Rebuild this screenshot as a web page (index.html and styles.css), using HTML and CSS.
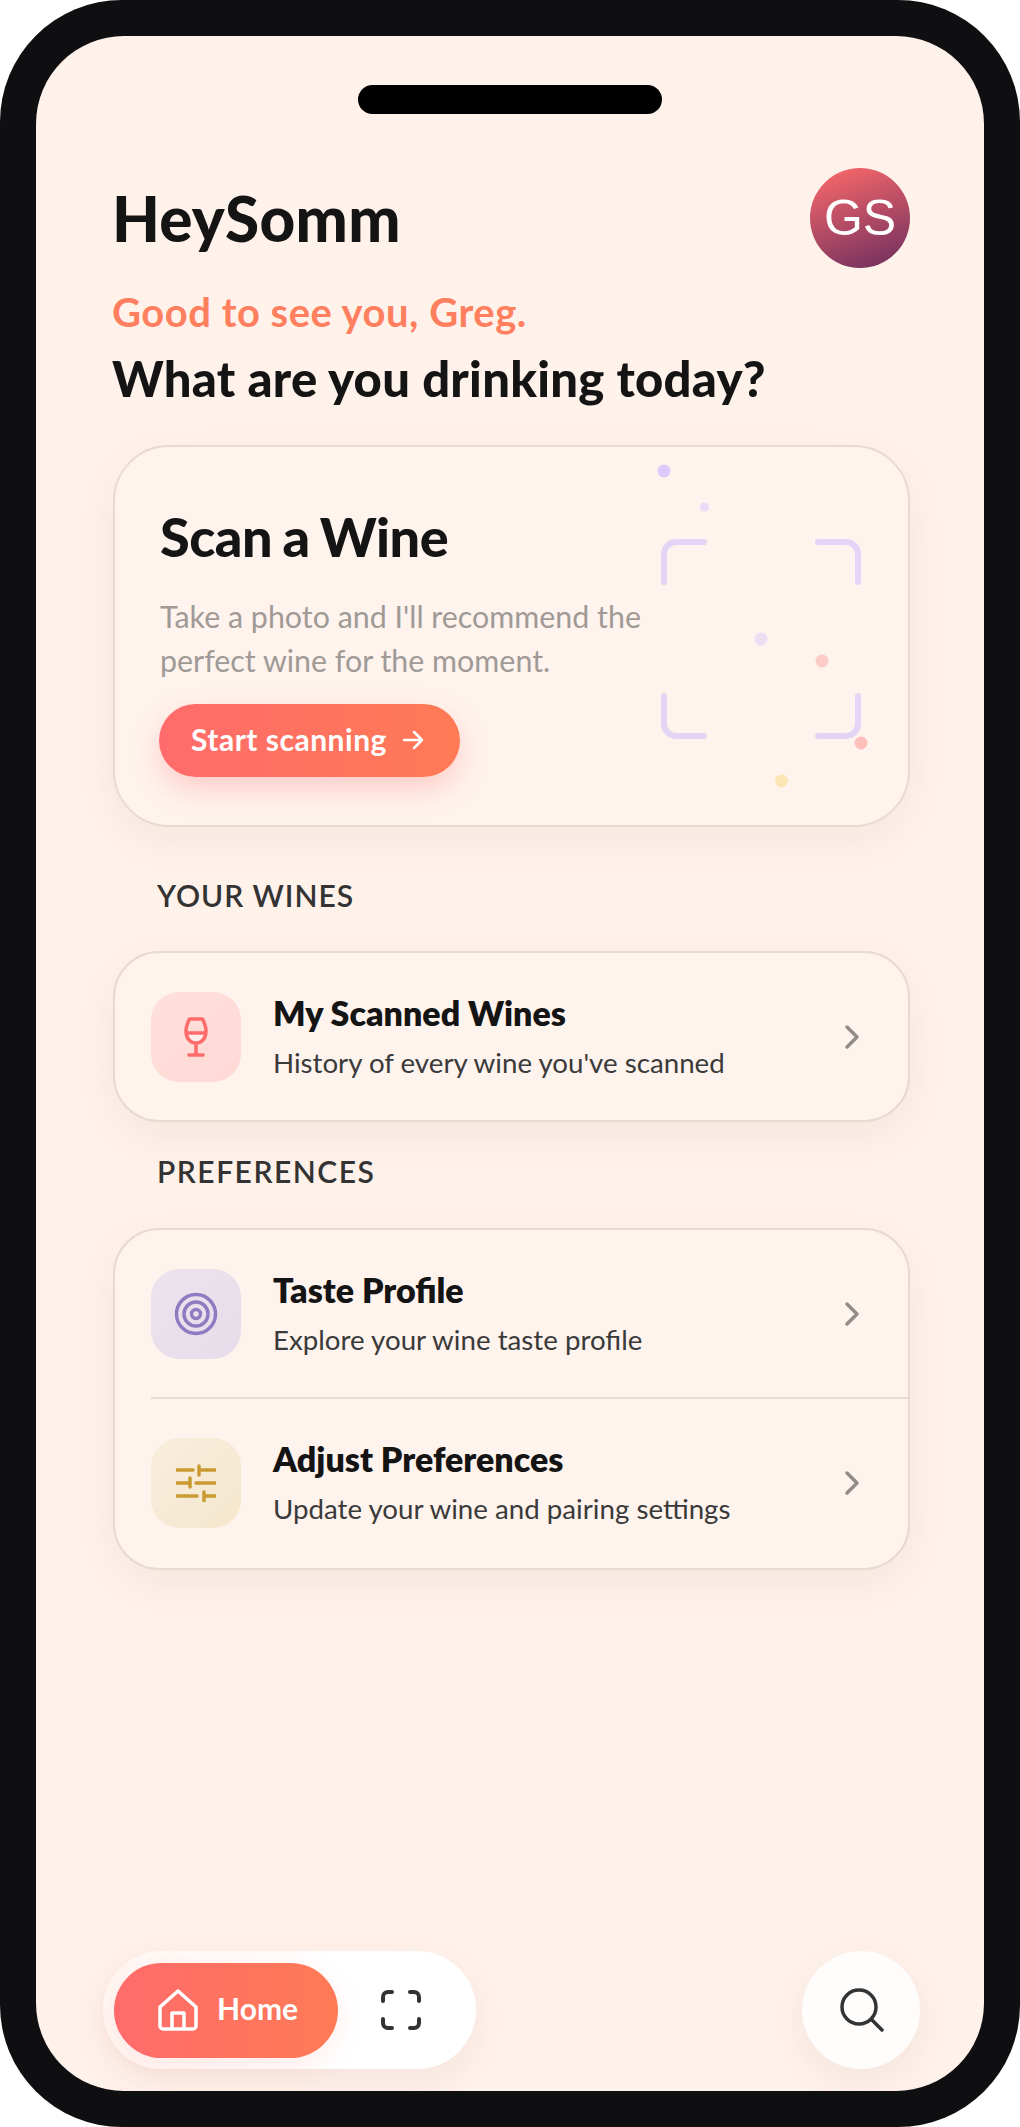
FILE: index.html
```html
<!DOCTYPE html>
<html lang="en">
<head>
<meta charset="utf-8">
<title>HeySomm</title>
<link rel="stylesheet" href="styles.css">
</head>
<body>
<div class="phone">
  <main class="screen">
    <div class="notch"></div>
    <header class="top">
      <h1 class="brand">HeySomm</h1>
      <div class="avatar">GS</div>
    </header>
    <p class="greeting">Good to see you, Greg.</p>
    <h2 class="question">What are you drinking today?</h2>

    <section class="card scan">
      <h3 class="scan-title">Scan a Wine</h3>
      <p class="scan-text">Take a photo and I'll recommend the perfect wine for the moment.</p>
      <button class="scan-btn"><span>Start scanning</span>
        <svg class="arrow" viewBox="0 0 22 22" width="22" height="22"><path d="M2 11h18M12 3l8 8-8 8"/></svg>
      </button>
      <svg class="scan-art" viewBox="0 0 270 382" width="270" height="382">
        <g class="frame">
          <path d="M24 137V109a12 12 0 0 1 12-12H64"/>
          <path d="M178 97H206a12 12 0 0 1 12 12V137"/>
          <path d="M24 251V279a12 12 0 0 0 12 12H64"/>
          <path d="M218 251V279a12 12 0 0 1-12 12H178"/>
        </g>
        <circle cx="24" cy="26" r="6.5" fill="#dccafb"/>
        <circle cx="64.500" cy="62" r="4.500" fill="#e8dcf6"/>
        <circle cx="121" cy="194" r="6.500" fill="#ecdff4"/>
        <circle cx="182" cy="216" r="6.500" fill="#ffcbc6"/>
        <circle cx="221" cy="298" r="6.500" fill="#ffbfba"/>
        <circle cx="141.500" cy="336" r="6.500" fill="#fbe5b3"/>
      </svg>
    </section>

    <h4 class="section-label">YOUR WINES</h4>
    <section class="card list">
      <div class="row">
        <div class="tile tile-red">
          <svg viewBox="0 0 30 46" width="30" height="46" class="ic ic-red">
            <path class="liquid" d="M5 19h20c0 6-4 10-10 10S5 25 5 19z"/>
            <path d="M8.500 5h13c1.500 3 3.500 8 3.500 12 0 7-4 12-10 12S5 24 5 17c0-4 2-9 3.500-12zM5.200 19h19.600M15 29v12M8 41h14"/>
          </svg>
        </div>
        <div class="row-text">
          <div class="row-title">My Scanned Wines</div>
          <div class="row-sub">History of every wine you've scanned</div>
        </div>
        <svg class="chev" viewBox="0 0 16 26" width="16" height="26"><path d="M3 3l10 10L3 23"/></svg>
      </div>
    </section>

    <h4 class="section-label label-pref">PREFERENCES</h4>
    <section class="card list">
      <div class="row">
        <div class="tile tile-purple">
          <svg viewBox="0 0 44 44" width="44" height="44" class="ic ic-purple">
            <circle cx="22" cy="22" r="19.500"/><circle cx="22" cy="22" r="12"/><circle cx="22" cy="22" r="4.500"/>
          </svg>
        </div>
        <div class="row-text">
          <div class="row-title">Taste Profile</div>
          <div class="row-sub">Explore your wine taste profile</div>
        </div>
        <svg class="chev" viewBox="0 0 16 26" width="16" height="26"><path d="M3 3l10 10L3 23"/></svg>
      </div>
      <div class="divider"></div>
      <div class="row row-last">
        <div class="tile tile-gold">
          <svg viewBox="0 0 40 38" width="40" height="38" class="ic ic-gold">
            <path d="M1 6h16M24 6h15M23 2v9M1 19h11M14 14v9M20 19h19M1 32h20M28 28v9M28 32h11"/>
          </svg>
        </div>
        <div class="row-text">
          <div class="row-title">Adjust Preferences</div>
          <div class="row-sub">Update your wine and pairing settings</div>
        </div>
        <svg class="chev" viewBox="0 0 16 26" width="16" height="26"><path d="M3 3l10 10L3 23"/></svg>
      </div>
    </section>

    <nav class="bottom">
      <div class="nav-pill">
        <div class="nav-home">
          <svg viewBox="0 0 40 42" width="40" height="42" class="ic ic-white">
            <path d="M2 18 20 2l18 16v19a3 3 0 0 1-3 3H5a3 3 0 0 1-3-3zM14 40V24h12v16"/>
          </svg>
          <span class="nav-label">Home</span>
        </div>
        <div class="nav-scan">
          <svg viewBox="0 0 40 40" width="40" height="40" class="ic ic-scan">
            <path d="M2 11V7a5 5 0 0 1 5-5h4M29 2h4a5 5 0 0 1 5 5v4M2 29v4a5 5 0 0 0 5 5h4M38 29v4a5 5 0 0 1-5 5h-4"/>
          </svg>
        </div>
      </div>
      <div class="nav-search">
        <svg viewBox="0 0 44 44" width="44" height="44" class="ic ic-dark">
          <circle cx="19" cy="19" r="17"/><path d="M31.500 31.500 42 42"/>
        </svg>
      </div>
    </nav>
  </main>
</div>
</body>
</html>
```
FILE: styles.css
```css
* { box-sizing: border-box; }
html, body { margin: 0; padding: 0; background: #fff; }
body { font-family: "Lato", "Liberation Sans", sans-serif; color: #141414; }

.phone {
  width: 1020px;
  height: 2127px;
  padding: 36px;
  background: #0f0f11;
  border-radius: 122px;
}
.screen {
  position: relative;
  height: 100%;
  padding: 49px 74px 22px 77px;
  display: flex;
  flex-direction: column;
  background: #fff2eb;
  border-radius: 88px;
  overflow: hidden;
}
.notch {
  align-self: center;
  flex: none;
  width: 304px;
  height: 29px;
  margin-right: 3px;
  background: #000;
  border-radius: 15px;
}
.top {
  display: flex;
  justify-content: space-between;
  align-items: flex-start;
  margin-top: 54px;
  flex: none;
}
.brand {
  margin: 12px 0 0 -1px;
  font-size: 62px;
  line-height: 76px;
  font-weight: 900;
  letter-spacing: .300px;
}
.avatar {
  width: 100px;
  height: 100px;
  border-radius: 50%;
  display: flex;
  align-items: center;
  justify-content: center;
  font-family: "Liberation Sans", sans-serif;
  font-size: 50px;
  color: #fff;
  background: linear-gradient(160deg, #ff6b6b 0%, #6b2d5e 100%);
}
.greeting {
  margin: 21px 0 0 -1px;
  font-size: 40px;
  line-height: 46px;
  font-weight: 700;
  letter-spacing: .500px;
  color: #ff7f5f;
}
.question {
  margin: 15px 0 0 -1px;
  font-size: 49px;
  line-height: 56px;
  font-weight: 900;
  letter-spacing: .270px;
}

.card {
  flex: none;
  background: #fff3ed;
  border: 2px solid #e9dad1;
  box-shadow: 0 14px 44px rgba(120, 80, 60, .07);
}
.scan {
  position: relative;
  height: 382px;
  margin-top: 39px;
  padding: 58px 45px 0;
  border-radius: 56px;
}
.scan-title {
  margin: 0;
  font-size: 54px;
  line-height: 64px;
  font-weight: 900;
  letter-spacing: -.500px;
  word-spacing: -2px;
}
.scan-text {
  width: 490px;
  margin: 25px 0 0;
  font-size: 30.400px;
  line-height: 44px;
  color: #a09a96;
}
.scan-btn {
  display: flex;
  align-items: center;
  gap: 15px;
  height: 73px;
  width: 301px;
  margin: 22px 0 0 -1px;
  padding: 0 0 0 32px;
  border: 0;
  border-radius: 37px;
  font-family: inherit;
  font-size: 30px;
  font-weight: 700;
  letter-spacing: .500px;
  color: #fff;
  background: linear-gradient(90deg, #ff6b6b, #ff7a55);
  box-shadow: 0 12px 28px rgba(255, 107, 107, .28);
}
.scan-btn span { margin-bottom: 4px; }
.arrow { fill: none; stroke: #fff; stroke-width: 2.500; stroke-linecap: round; stroke-linejoin: round; margin-bottom: 2px; }
.scan-art { position: absolute; right: -2px; top: -2px; }
.frame { fill: none; stroke: #e2d5f5; stroke-width: 6; stroke-linecap: round; }

.section-label {
  flex: none;
  margin: 50px 0 0 44px;
  font-size: 30px;
  line-height: 36px;
  font-weight: 600;
  letter-spacing: 1px;
  color: #333;
}
.label-pref { margin-top: 31px; letter-spacing: 1.500px; }
.list { margin-top: 38px; border-radius: 46px; }
.label-pref + .list { margin-top: 39px; }

.row {
  display: flex;
  align-items: center;
  height: 167px;
  padding: 0 48px 0 36px;
}
.row-last { height: 169px; padding-bottom: 2px; }
.tile {
  flex: none;
  width: 90px;
  height: 90px;
  border-radius: 28px;
  display: flex;
  align-items: center;
  justify-content: center;
}
.tile-red { background: linear-gradient(135deg, #ffe0dc, #ffd8d4); }
.tile-purple { background: linear-gradient(135deg, #ece3ee, #e7ddea); }
.tile-gold { background: linear-gradient(135deg, #f8eedd, #f5e7cd); }
.row-text { flex: 1; margin-left: 32px; padding-bottom: 1px; }
.row-title { font-size: 34px; line-height: 40px; font-weight: 800; }
.row-sub { margin-top: 13px; font-size: 27.700px; line-height: 34px; color: #3a3a3a; }
.divider { height: 2px; margin-left: 36px; background: #e9dad1; }
.chev { flex: none; fill: none; stroke: #918c88; stroke-width: 3.500; stroke-linecap: round; stroke-linejoin: round; }

.ic { fill: none; stroke-linecap: round; stroke-linejoin: round; }
.ic-red { stroke: #ff6b6b; stroke-width: 3.500; }
.liquid { fill: #ffeeeb; stroke: none; }
.ic-purple { stroke: #8e7cc3; stroke-width: 3.500; }
.ic-gold { stroke: #c99a32; stroke-width: 3.500; }
.ic-white { stroke: #fff; stroke-width: 3.500; }
.ic-dark { stroke: #333; stroke-width: 3.500; }
.ic-scan { stroke: #333; stroke-width: 4; }

.bottom {
  display: flex;
  justify-content: space-between;
  align-items: center;
  margin: auto -10px 0 -10px;
  flex: none;
}
.nav-pill {
  display: flex;
  align-items: center;
  width: 373px;
  height: 118px;
  padding: 0 11px;
  border-radius: 59px;
  background: linear-gradient(90deg, #fff7f3, #fff 60%);
  box-shadow: 0 12px 36px rgba(120, 80, 60, .08);
}
.nav-home {
  display: flex;
  align-items: center;
  gap: 19px;
  width: 224px;
  height: 95px;
  padding-left: 44px;
  border-radius: 48px;
  font-size: 30px;
  font-weight: 700;
  color: #fff;
  background: linear-gradient(90deg, #ff6b6b, #ff7a55);
  box-shadow: 0 8px 28px rgba(255, 107, 107, .12);
}
.nav-label { margin-bottom: 4px; }
.nav-scan { margin-left: 43px; display: flex; }
.nav-search {
  width: 118px;
  height: 118px;
  padding-left: 1px;
  border-radius: 50%;
  display: flex;
  align-items: center;
  justify-content: center;
  background: #fffdfb;
  box-shadow: 0 12px 36px rgba(120, 80, 60, .08);
}
```
